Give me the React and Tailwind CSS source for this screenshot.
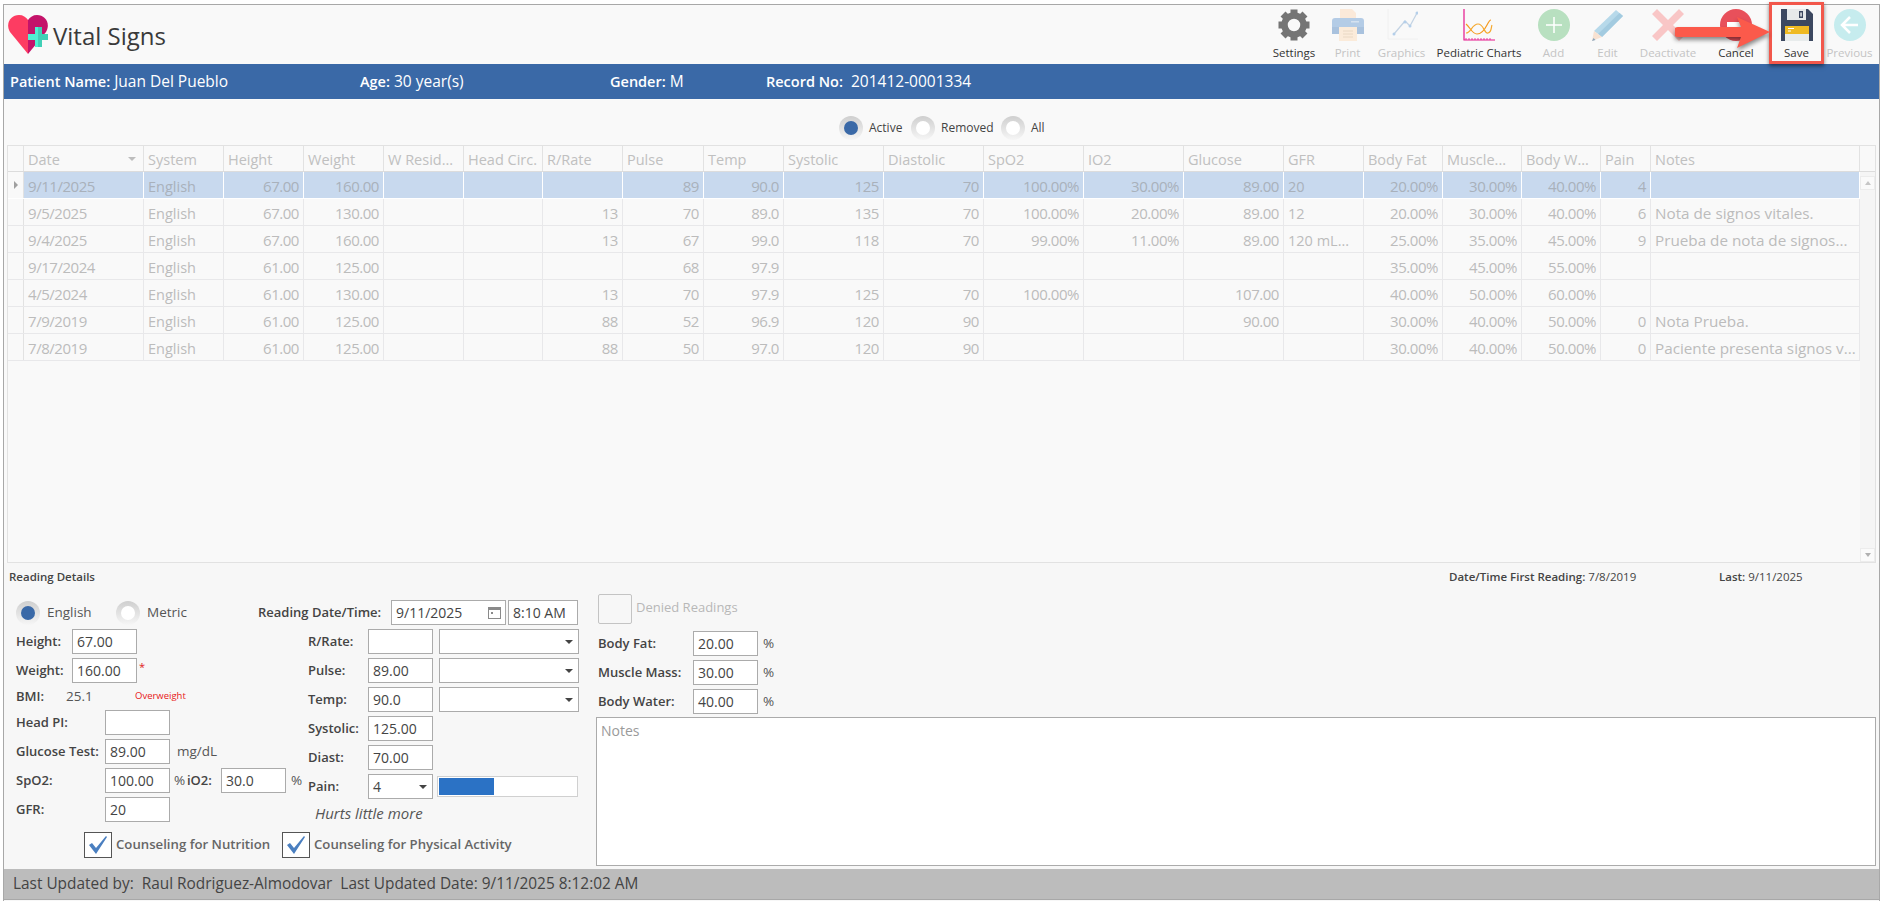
import React from "react";

const ALIGN = ["l","l","r","r","r","r","r","r","r","r","r","r","r","r","l","r","r","r","r","l"];
const HEAD = ["Date","System","Height","Weight","W Resid...","Head Circ.","R/Rate","Pulse","Temp","Systolic","Diastolic","SpO2","IO2","Glucose","GFR","Body Fat","Muscle...","Body W...","Pain","Notes"];
const ROWS = [
  ["9/11/2025","English","67.00","160.00","","","","89","90.0","125","70","100.00%","30.00%","89.00","20","20.00%","30.00%","40.00%","4",""],
  ["9/5/2025","English","67.00","130.00","","","13","70","89.0","135","70","100.00%","20.00%","89.00","12","20.00%","30.00%","40.00%","6","Nota de signos vitales."],
  ["9/4/2025","English","67.00","160.00","","","13","67","99.0","118","70","99.00%","11.00%","89.00","120 mL...","25.00%","35.00%","45.00%","9","Prueba de nota de signos..."],
  ["9/17/2024","English","61.00","125.00","","","","68","97.9","","","","","","","35.00%","45.00%","55.00%","",""],
  ["4/5/2024","English","61.00","130.00","","","13","70","97.9","125","70","100.00%","","107.00","","40.00%","50.00%","60.00%","",""],
  ["7/9/2019","English","61.00","125.00","","","88","52","96.9","120","90","","","90.00","","30.00%","40.00%","50.00%","0","Nota Prueba."],
  ["7/8/2019","English","61.00","125.00","","","88","50","97.0","120","90","","","","","30.00%","40.00%","50.00%","0","Paciente presenta signos v..."],
];

function Gear() {
  return (
    <svg width="32" height="32" viewBox="0 0 32 32">
      {[0,45,90,135,180,225,270,315].map((a) => (
        <rect key={a} x="12.5" y="0.5" width="7" height="7" fill="#757575" transform={`rotate(${a} 16 16)`} />
      ))}
      <circle cx="16" cy="16" r="9.5" fill="none" stroke="#757575" strokeWidth="6.5" />
    </svg>
  );
}
function Printer() {
  return (
    <svg width="32" height="32" viewBox="0 0 32 32">
      <path d="M8 0h12l4 4v8H8z" fill="#fbe9d9" />
      <path d="M3 9h26a3 3 0 0 1 3 3v13H0V12a3 3 0 0 1 3-3z" fill="#b4cce6" />
      <rect x="0" y="18" width="32" height="7" fill="#a9c2de" />
      <rect x="7" y="18" width="18" height="14" fill="#fbebda" />
      <path d="M11 22h10M11 25h10M11 28h10" stroke="#e9d8c4" strokeWidth="1" />
      <rect x="19" y="12" width="8" height="1.5" fill="#d5e2f0" />
    </svg>
  );
}
function Graphics() {
  return (
    <svg width="32" height="32" viewBox="0 0 32 32">
      <path d="M2 0v30h30" fill="none" stroke="#f0f0f0" strokeWidth="1" />
      <path d="M8 25l11-13 5 5 7-13" fill="none" stroke="#c4d4e4" strokeWidth="1.3" />
      <g fill="#b4cfea"><circle cx="8" cy="25" r="1.5" /><circle cx="19" cy="13" r="1.5" /><circle cx="24" cy="17" r="1.5" /><circle cx="31" cy="4" r="1.5" /></g>
    </svg>
  );
}
function Pediatric() {
  return (
    <svg width="32" height="32" viewBox="0 0 32 32">
      <path d="M1 0v31h31" fill="none" stroke="#e5178c" strokeWidth="1.2" />
      <path d="M3 31v-2M6 31v-2M9 31v-2M12 31v-2M15 31v-2M18 31v-2M21 31v-2M24 31v-2M27 31v-2" stroke="#e5178c" strokeWidth="0.8" />
      <path d="M3 15c4 3 6 10 11 10s8-5 10-9 3-5 4-5" fill="none" stroke="#f59a1f" strokeWidth="1.2" />
      <path d="M3 24c5 0 6-9 12-9s6 10 10 9 3-6 4-8" fill="none" stroke="#f5a92f" strokeWidth="1.2" />
    </svg>
  );
}
function Add() {
  return (
    <svg width="32" height="32" viewBox="0 0 32 32">
      <circle cx="16" cy="16" r="16" fill="#b8e0c0" />
      <path d="M16 8v16M8 16h16" stroke="#fff" strokeWidth="1.5" />
    </svg>
  );
}
function Edit() {
  return (
    <svg width="32" height="32" viewBox="0 0 32 32">
      <path d="M24 1l7 6L10 28l-8-6z" fill="#b7d9ea" />
      <path d="M27.5 4l3.500 3L10 28l-4-3z" fill="#a3cbe0" />
      <path d="M2 22l8 6-10 4z" fill="#f8e2d2" />
      <path d="M0 32l1.500-3 2 2z" fill="#8aa6bc" />
    </svg>
  );
}
function XIcon() {
  return (
    <svg width="32" height="32" viewBox="0 0 32 32">
      <path d="M5 0l11 11L27 0l5 5-11 11 11 11-5 5-11-11L5 32l-5-5 11-11L0 5z" fill="#f9c6c6" />
    </svg>
  );
}
function Cancel() {
  return (
    <svg width="32" height="32" viewBox="0 0 32 32">
      <circle cx="16" cy="16" r="16" fill="#e8505b" />
      <rect x="7" y="13" width="18" height="6" fill="#fff" />
    </svg>
  );
}
function Save() {
  return (
    <svg width="32" height="32" viewBox="0 0 32 32">
      <path d="M0 0h27l5 5v27H0z" fill="#3c4860" />
      <rect x="6" y="0" width="19" height="11" fill="#e6e9ea" />
      <rect x="18" y="2" width="4" height="7" fill="#3c4860" />
      <rect x="19.300" y="3.500" width="1.500" height="4" fill="#e6e9ea" />
      <rect x="4" y="17" width="24" height="15" fill="#e8ecec" />
      <rect x="4" y="17" width="24" height="8" fill="#efba22" />
      <path d="M7 19.500h6M7 22h3" stroke="#fff" strokeWidth="1" />
    </svg>
  );
}
function Prev() {
  return (
    <svg width="32" height="32" viewBox="0 0 32 32">
      <circle cx="16" cy="16" r="16" fill="#c6ecee" />
      <path d="M16 8l-8 8 8 8M8 16h16" fill="none" stroke="#fff" strokeWidth="2.500" />
    </svg>
  );
}

function Tool({ w, label, off, children }) {
  return (
    <div className="flex flex-col items-center shrink-0" style={{ width: w }}>
      <div className="h-[32px] mt-[4px]">{children}</div>
      <span className={`mt-[4px] text-[11.5px] leading-[16px] whitespace-nowrap ${off ? "text-[#c4c4c4]" : "text-[#333333]"}`}>{label}</span>
    </div>
  );
}

function Radio({ on, className = "" }) {
  return (
    <span className={`w-[24px] h-[24px] rounded-full bg-gradient-to-b from-[#cfcfcf] to-[#f6f6f6] flex items-center justify-center shrink-0 ${className}`}>
      <span className={`w-[14px] h-[14px] rounded-full ${on ? "bg-[#3a69a7]" : "bg-white"}`} />
    </span>
  );
}

function Field({ v, w = "w-[65px]" }) {
  return (
    <div className={`h-[25px] ${w} border border-[#ababab] bg-white pl-[4px] text-[14px] leading-[23px] text-[#444444] shrink-0 overflow-hidden`}>{v}</div>
  );
}

function Caret({ className = "" }) {
  return <span className={`w-0 h-0 border-x-[4px] border-x-transparent border-t-[4px] border-t-[#444444] ${className}`} />;
}

function Select({ v = "", w = "w-[140px]" }) {
  return (
    <div className={`h-[25px] ${w} border border-[#ababab] bg-white pl-[4px] pr-[5px] text-[14px] leading-[23px] text-[#444444] flex items-center justify-between shrink-0`}>
      <span>{v}</span>
      <Caret />
    </div>
  );
}

function Label({ children, w }) {
  return <span className={`${w} shrink-0 text-[13px] font-semibold text-[#444444] whitespace-nowrap`}>{children}</span>;
}

function Row({ children, className = "mb-[4px]" }) {
  return <div className={`h-[25px] flex items-center ${className}`}>{children}</div>;
}

function Check({ label, className = "" }) {
  return (
    <div className={`flex items-center ${className}`}>
      <span className="w-[28px] h-[26px] border border-[#555555] bg-white flex items-center justify-center shrink-0">
        <svg width="22" height="22" viewBox="0 0 22 22"><path d="M2 11l3-2 4 5L19 2l1 1L9 20z" fill="#4a7fc0" /></svg>
      </span>
      <span className="ml-[4px] text-[13.2px] font-semibold text-[#666666] whitespace-nowrap">{label}</span>
    </div>
  );
}

function cellFont(i) {
  if (i === 19) return "text-[15.25px] pt-[2px]";
  if (i === 1 || i === 14) return "text-[14.5px] pt-[3px]";
  return "text-[15px] tracking-[-0.45px] pt-[2px]";
}

export default function App() {
  const cols = "grid grid-cols-[16px_120px_80px_80px_80px_80px_79px_80px_81px_80px_100px_100px_100px_100px_100px_80px_79px_79px_79px_50px_209px]";
  const headCols = "grid grid-cols-[16px_120px_80px_80px_80px_80px_79px_80px_81px_80px_100px_100px_100px_100px_100px_80px_79px_79px_79px_50px_209px_16px]";
  return (
    <div className="w-[1884px] h-[903px] bg-white pt-[4px] pl-[3px] font-['Open_Sans',sans-serif] overflow-hidden">
      <div className="relative w-[1877px] h-[897px] border-l border-t border-r border-[#a8a8a8] bg-[#f9f9f9] flex flex-col">
        {/* Top bar */}
        <div className="h-[59px] flex items-start justify-between shrink-0">
          <div className="flex items-start pl-[4px] pt-[10px]">
            <svg width="40" height="40" viewBox="0 0 40 40" className="shrink-0">
              <path d="M20 39L2 17C-3 8 3 0 11 0c4 0 7 2 9 5z" fill="#fd3c62" />
              <path d="M20 39l18-22c5-9-1-17-9-17-4 0-7 2-9 5z" fill="#c4136a" />
              <path d="M27 12v7h-7v6h7v7h3V12z" fill="#4ff0d2" />
              <path d="M30 12h4v7h6v6h-6v7h-4z" fill="#41d0b6" />
            </svg>
            <span className="ml-[5px] mt-[1px] text-[24px] leading-[40px] text-[#3a3a3a]">Vital Signs</span>
          </div>
          <div className="flex">
            <Tool w={54} label="Settings"><Gear /></Tool>
            <Tool w={53} label="Print" off><Printer /></Tool>
            <Tool w={55} label="Graphics" off><Graphics /></Tool>
            <Tool w={100} label="Pediatric Charts"><Pediatric /></Tool>
            <Tool w={49} label="Add" off><Add /></Tool>
            <Tool w={59} label="Edit" off><Edit /></Tool>
            <Tool w={62} label="Deactivate" off><XIcon /></Tool>
            <Tool w={74} label="Cancel"><Cancel /></Tool>
            <Tool w={47} label="Save"><Save /></Tool>
            <Tool w={59} label="Previous" off><Prev /></Tool>
          </div>
        </div>

        {/* Annotation */}
        <div className="absolute left-[1765px] top-[-3px] w-[55px] h-[62px] border-[3px] border-[#f2574b] shadow-[0_2px_4px_rgba(0,0,0,0.5)]" />
        <svg className="absolute left-[1671px] top-[12px] drop-shadow-[0_3px_2px_rgba(0,0,0,0.45)]" width="96" height="31" viewBox="0 0 96 31">
          <path d="M3 10h63L62 0l33 15-33 16 4-11H3a5 5 0 0 1 0-10z" fill="#fb5a4b" />
        </svg>

        {/* Patient bar */}
        <div className="h-[35px] pt-[1px] bg-[#3a69a7] flex items-center text-[15.5px] text-white shrink-0 pl-[6px]">
          <span className="w-[350px]"><b className="font-semibold text-[14.5px]">Patient Name:</b> Juan Del Pueblo</span>
          <span className="w-[250px]"><b className="font-semibold text-[14.5px]">Age:</b> 30 year(s)</span>
          <span className="w-[156px]"><b className="font-semibold text-[14.5px]">Gender:</b> M</span>
          <span><b className="font-semibold text-[14.5px]">Record No:</b>&nbsp; 201412-0001334</span>
        </div>

        {/* Filter */}
        <div className="h-[46px] flex items-end pb-[5px] pl-[835px] text-[12px] text-[#444444] shrink-0">
          <div className="flex items-center">
            <Radio on />
            <span className="ml-[6px] w-[36px]">Active</span>
            <Radio className="ml-[6px]" />
            <span className="ml-[6px] w-[54px]">Removed</span>
            <Radio className="ml-[6px]" />
            <span className="ml-[6px]">All</span>
          </div>
        </div>

        {/* Grid */}
        <div className="ml-[3px] w-[1869px] h-[418px] border border-[#e2e2e2] flex flex-col text-[#bcbcbc] shrink-0">
          <div className={`${headCols} h-[26px] border-b border-[#dcdcdc] text-[14.5px] text-[#c0c0c0] shrink-0`}>
            <div className="border-r border-[#e2e2e2]" />
            {HEAD.map((h, i) => (
              <div key={h} className="relative h-[25px] border-r border-[#e2e2e2] pl-[4px] pt-[3px] leading-[22px] whitespace-nowrap overflow-hidden">
                {h}
                {i === 0 && <Caret className="absolute right-[7px] top-[11px] border-t-[#bdbdbd]" />}
              </div>
            ))}
            <div />
          </div>
          <div className="flex flex-1 min-h-0">
            <div className="w-[1852px]">
              {ROWS.map((r, ri) => (
                <div key={ri} className={`${cols} h-[27px] border-b border-[#e8e8ea] ${ri === 0 ? "bg-[#c8d9ee] border-b-white" : ""}`}>
                  <div className="border-r border-[#e2e2e2] bg-[#f9f9f9] flex items-center justify-center">
                    {ri === 0 && <span className="w-0 h-0 border-y-[4px] border-y-transparent border-l-[4px] border-l-[#a0a0a0]" />}
                  </div>
                  {r.map((c, i) => (
                    <div key={i} className={`h-[26px] border-r ${ri === 0 ? "border-white" : "border-[#e8e8ea]"} px-[4px] leading-[24px] whitespace-nowrap overflow-hidden ${cellFont(i)} ${ALIGN[i] === "r" ? "text-right" : ""} ${ri === 0 ? "text-[#a9b1bb]" : ""}`}>{c}</div>
                  ))}
                </div>
              ))}
            </div>
            <div className="w-[15px] bg-[#f5f5f5] flex flex-col justify-between">
              <div className="h-[14px] mt-[4px] bg-[#fafafa] border border-[#ececec] flex items-center justify-center">
                <span className="w-0 h-0 border-x-[3px] border-x-transparent border-b-[4px] border-b-[#c6c6c6]" />
              </div>
              <div className="h-[14px] bg-[#fafafa] border border-[#ececec] flex items-center justify-center">
                <span className="w-0 h-0 border-x-[3px] border-x-transparent border-t-[4px] border-t-[#b0b0b0]" />
              </div>
            </div>
          </div>
        </div>

        {/* Lower section */}
        <div className="flex-1 bg-[#f7f7f7] flex flex-col min-h-0">
          <div className="h-[31px] pb-[3px] flex items-center text-[11.5px] text-[#444444] shrink-0">
            <span className="w-[1445px] pl-[5px] font-semibold">Reading Details</span>
            <span className="w-[270px]"><b className="font-semibold">Date/Time First Reading:</b> 7/8/2019</span>
            <span><b className="font-semibold">Last:</b> 9/11/2025</span>
          </div>

          <div className="flex h-[275px]">
            <div className="w-[592px] shrink-0 pl-[12px]">
              <div className="flex">
                {/* col 1 */}
                <div className="w-[292px] shrink-0 pt-[6px]">
                  <div className="h-[25px] mb-[4px] flex items-center text-[13.5px] text-[#555555]">
                    <Radio on />
                    <span className="ml-[7px] w-[69px]">English</span>
                    <Radio />
                    <span className="ml-[7px]">Metric</span>
                  </div>
                  <Row><Label w="w-[56px]">Height:</Label><Field v="67.00" /></Row>
                  <Row className="mb-0"><Label w="w-[56px]">Weight:</Label><Field v="160.00" /><span className="ml-[2px] mb-[6px] text-[11px] text-[#e02020]">*</span></Row>
                  <div className="h-[27px] flex items-center">
                    <Label w="w-[50px]">BMI:</Label>
                    <span className="w-[69px] text-[13.5px] text-[#555555]">25.1</span>
                    <span className="text-[9.5px] text-[#e81818]">Overweight</span>
                  </div>
                  <Row><Label w="w-[89px]">Head PI:</Label><Field v="" /></Row>
                  <Row><Label w="w-[89px]">Glucose Test:</Label><Field v="89.00" /><span className="ml-[7px] text-[13.5px] text-[#555555]">mg/dL</span></Row>
                  <Row>
                    <Label w="w-[89px]">SpO2:</Label><Field v="100.00" />
                    <span className="ml-[4px] w-[13px] text-[13.5px] text-[#555555]">%</span>
                    <Label w="w-[34px]">iO2:</Label><Field v="30.0" />
                    <span className="ml-[5px] text-[13.5px] text-[#555555]">%</span>
                  </Row>
                  <Row className="mb-0"><Label w="w-[89px]">GFR:</Label><Field v="20" /></Row>
                </div>
                {/* col 2 */}
                <div className="w-[272px] shrink-0 pt-[6px]">
                  <div className="h-[25px] mb-[4px] flex items-center -ml-[50px]">
                    <span className="w-[133px] shrink-0 text-[13px] font-semibold text-[#444444] whitespace-nowrap">Reading Date/Time:</span>
                    <div className="h-[25px] w-[115px] border border-[#ababab] bg-white pl-[4px] pr-[4px] text-[14px] leading-[23px] text-[#444444] flex items-center justify-between shrink-0">
                      <span>9/11/2025</span>
                      <svg width="13" height="13" viewBox="0 0 13 13"><rect x="0.500" y="1.500" width="12" height="11" fill="none" stroke="#8a8a8a" /><rect x="1" y="2" width="11" height="2" fill="#8a8a8a" /><rect x="3" y="6" width="2" height="2" fill="#8a8a8a" /></svg>
                    </div>
                    <Field v="8:10 AM" w="ml-[2px] w-[70px]" />
                  </div>
                  <Row><Label w="w-[60px]">R/Rate:</Label><Field v="" /><span className="w-[6px]" /><Select /></Row>
                  <Row><Label w="w-[60px]">Pulse:</Label><Field v="89.00" /><span className="w-[6px]" /><Select /></Row>
                  <Row><Label w="w-[60px]">Temp:</Label><Field v="90.0" /><span className="w-[6px]" /><Select /></Row>
                  <Row><Label w="w-[60px]">Systolic:</Label><Field v="125.00" /></Row>
                  <Row><Label w="w-[60px]">Diast:</Label><Field v="70.00" /></Row>
                  <Row className="mb-0">
                    <Label w="w-[60px]">Pain:</Label>
                    <Select v="4" w="w-[65px]" />
                    <div className="ml-[4px] w-[141px] h-[21px] border border-[#d0d0d0] bg-white p-[1px]">
                      <div className="w-[55px] h-full bg-[#2b72c5]" />
                    </div>
                  </Row>
                  <div className="h-[28px] pl-[7px] flex items-center text-[15px] italic text-[#555555]">Hurts little more</div>
                </div>
              </div>
              {/* checks */}
              <div className="flex items-center mt-[5px] ml-[68px]">
                <Check label="Counseling for Nutrition" className="w-[198px]" />
                <Check label="Counseling for Physical Activity" />
              </div>
            </div>

            {/* col 3 */}
            <div className="flex-1 min-w-0 pr-[3px]">
              <div className="h-[30px] flex items-center ml-[2px]">
                <span className="w-[34px] h-[30px] border border-[#c4c4c4] rounded-[2px] shrink-0" />
                <span className="ml-[4px] pb-[2px] text-[13px] text-[#b8b8b8]">Denied Readings</span>
              </div>
              <div className="h-[7px]" />
              {[["Body Fat:","20.00"],["Muscle Mass:","30.00"],["Body Water:","40.00"]].map(([l,v]) => (
                <Row key={l} className="ml-[2px] mb-[4px]"><Label w="w-[95px]">{l}</Label><Field v={v} /><span className="ml-[5px] text-[13.5px] text-[#555555]">%</span></Row>
              ))}
              <div className="mt-[-1px] h-[149px] border border-[#ababab] bg-white pl-[4px] pt-[2px] text-[14px] text-[#9a9a9a]">Notes</div>
            </div>
          </div>

          {/* Footer */}
          <div className="h-[31px] bg-[#bcbcbc] border-b border-[#a8a8a8] pl-[9px] flex items-center text-[15.4px] text-[#444444] whitespace-pre shrink-0">Last Updated by:  Raul Rodriguez-Almodovar  Last Updated Date: 9/11/2025 8:12:02 AM</div>
        </div>
      </div>
    </div>
  );
}
